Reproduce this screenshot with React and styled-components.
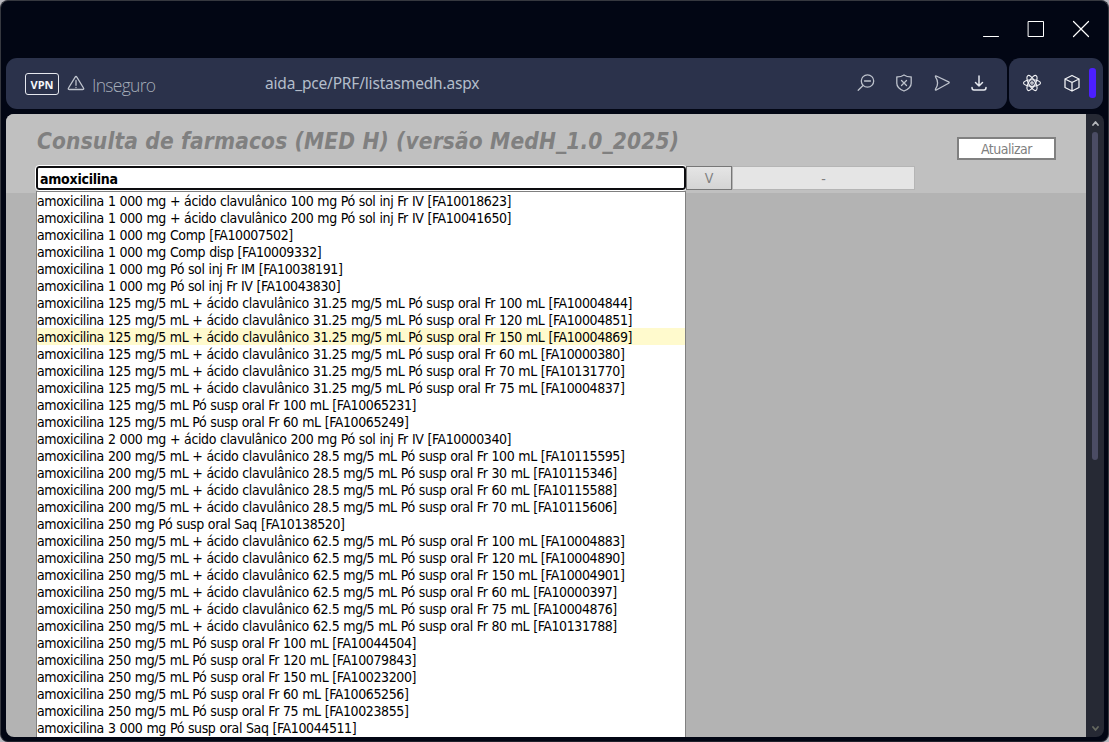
import React from 'react';
import styled, { createGlobalStyle } from 'styled-components';

const Global = createGlobalStyle`
  * { box-sizing: border-box; }
  html, body { margin: 0; padding: 0; background: #b9b8bf; }
  body { width: 1109px; height: 742px; overflow: hidden; }
`;

const Window = styled.div`
  width: 1109px;
  height: 742px;
  display: flex;
  flex-direction: column;
  background: #020614;
  border: 1px solid #36383f;
  border-bottom-color: #20232d;
  border-radius: 8px;
  overflow: hidden;
`;

const TitleBar = styled.header`
  height: 57px;
  flex: none;
  display: flex;
  justify-content: flex-end;
  gap: 21px;
  padding: 16px 15px 0 0;
`;

const Toolbar = styled.nav`
  height: 51px;
  flex: none;
  display: flex;
  gap: 2px;
  padding: 0 5px;
`;

const Group = styled.div`
  height: 51px;
  width: ${(p) => p.$width}px;
  display: flex;
  align-items: center;
  background: #2b324b;
  border-radius: 11px;
  padding-left: ${(p) => p.$inset}px;
`;

const Vpn = styled.span`
  width: 34px;
  height: 22px;
  border: 1px solid #e6e8ee;
  border-radius: 3px;
  color: #f5f6fa;
  font: 700 11px/21px 'Open Sans', sans-serif;
  text-align: center;
  margin-right: 8px;
`;

const Security = styled.span`
  width: 173px;
  margin-left: 7px;
  padding-top: 3px;
  color: #a5adb9;
  font: 300 17.5px/24px 'Open Sans', sans-serif;
  letter-spacing: -0.7px;
`;

const Address = styled.span`
  width: 591px;
  padding-bottom: 1px;
  color: #b3bdca;
  font: 400 15.5px/24px 'Noto Sans', sans-serif;
  letter-spacing: -0.18px;
`;

const Actions = styled.div`
  display: flex;
  gap: 18px;
  padding-bottom: 1px;
`;

const Extensions = styled.div`
  display: flex;
  align-items: center;
  gap: 20px;
  padding-bottom: 1px;
`;

const Accent = styled.i`
  width: 7px;
  height: 30px;
  margin: -1px 0 0 7px;
  border-radius: 3px;
  background: #4c1fff;
`;

const Viewport = styled.div`
  display: flex;
  width: 1098px;
  height: 623px;
  margin: 5px 0 0 5px;
  border-radius: 8px;
  overflow: hidden;
`;

const Page = styled.main`
  width: 1080px;
  height: 623px;
  background: #b3b3b3;
  overflow: hidden;
`;

const Header = styled.section`
  height: 79px;
  display: flex;
  justify-content: space-between;
  padding: 0 30px;
  background: #c0c0c0;
`;

const Search = styled.div`
  display: flex;
  flex-direction: column;
`;

const Heading = styled.h1`
  height: 52px;
  margin: 0;
  padding-left: 1px;
  color: #808080;
  font: italic 700 22.5px/55px 'DejaVu Sans Condensed', 'DejaVu Sans', sans-serif;
  letter-spacing: 0.15px;
  white-space: nowrap;
`;

const Controls = styled.div`
  display: flex;
  height: 24px;
`;

const Query = styled.input`
  width: 650px;
  height: 24px;
  padding: 1px 2px 0;
  border: 2px solid #0d0d10;
  border-radius: 3px;
  outline: 1px solid #fff;
  color: #000;
  background: #fff;
  font: 700 14px/20px 'DejaVu Sans Condensed', 'DejaVu Sans', sans-serif;
  letter-spacing: -0.25px;
  caret-color: transparent;
`;

const Toggle = styled.button`
  width: 46px;
  height: 24px;
  padding: 1px 0 0;
  border: 1px solid #777;
  background: linear-gradient(#e5e5e5, #d4d4d4);
  color: #808080;
  font: 14px/21px 'DejaVu Sans Condensed', sans-serif;
`;

const Result = styled.div`
  width: 183px;
  height: 24px;
  border: 1px solid #b5b5b5;
  background: #e5e5e5;
  color: #808080;
  text-align: center;
  font: 14px/24px 'DejaVu Sans Condensed', sans-serif;
`;

const Refresh = styled.button`
  width: 99px;
  height: 23px;
  margin-top: 23px;
  padding: 1px 0 0;
  border: 2px solid #808080;
  background: #fff;
  color: #808080;
  font: 14px/18px 'DejaVu Sans Condensed', sans-serif;
  letter-spacing: -0.5px;
`;

const Options = styled.ul`
  width: 650px;
  height: 546px;
  margin: -2px 0 0 30px;
  padding: 0;
  position: relative;
  list-style: none;
  border: solid #808080;
  border-width: 1px 1px 0;
  background: #fff;
`;

const Option = styled.li`
  height: 17px;
  background: ${(p) => (p.$active ? '#fffacd' : '#fff')};
  color: #000;
  font: 14px/18px 'DejaVu Sans Condensed', sans-serif;
  letter-spacing: -0.4px;
  word-spacing: 0.42px;
  white-space: nowrap;
`;

const Scrollbar = styled.aside`
  width: 18px;
  height: 623px;
  display: flex;
  flex-direction: column;
  align-items: center;
  padding: 6px 0 5px;
  background: #262934;
`;

const Thumb = styled.div`
  width: 6px;
  height: 328px;
  margin: 5px 0 auto;
  border-radius: 3px;
  background: #4b4c64;
`;

const Drawing = styled.svg`
  display: block;
  flex: none;
  fill: none;
  stroke: ${(p) => p.$color || '#bdc2cc'};
  stroke-width: ${(p) => p.$line || 1.3};
  stroke-linecap: round;
  stroke-linejoin: round;
`;

const Icon = ({ size = 20, color, line, children }) => (
  <Drawing width={size} height={size} viewBox={`0 0 ${size} ${size}`} $color={color} $line={line}>
    {children}
  </Drawing>
);

const clav = 'ácido clavulânico';
const rows = [
  `1 000 mg + ${clav} 100 mg Pó sol inj Fr IV [FA10018623]`,
  `1 000 mg + ${clav} 200 mg Pó sol inj Fr IV [FA10041650]`,
  '1 000 mg Comp [FA10007502]',
  '1 000 mg Comp disp [FA10009332]',
  '1 000 mg Pó sol inj Fr IM [FA10038191]',
  '1 000 mg Pó sol inj Fr IV [FA10043830]',
  `125 mg/5 mL + ${clav} 31.25 mg/5 mL Pó susp oral Fr 100 mL [FA10004844]`,
  `125 mg/5 mL + ${clav} 31.25 mg/5 mL Pó susp oral Fr 120 mL [FA10004851]`,
  `125 mg/5 mL + ${clav} 31.25 mg/5 mL Pó susp oral Fr 150 mL [FA10004869]`,
  `125 mg/5 mL + ${clav} 31.25 mg/5 mL Pó susp oral Fr 60 mL [FA10000380]`,
  `125 mg/5 mL + ${clav} 31.25 mg/5 mL Pó susp oral Fr 70 mL [FA10131770]`,
  `125 mg/5 mL + ${clav} 31.25 mg/5 mL Pó susp oral Fr 75 mL [FA10004837]`,
  '125 mg/5 mL Pó susp oral Fr 100 mL [FA10065231]',
  '125 mg/5 mL Pó susp oral Fr 60 mL [FA10065249]',
  `2 000 mg + ${clav} 200 mg Pó sol inj Fr IV [FA10000340]`,
  `200 mg/5 mL + ${clav} 28.5 mg/5 mL Pó susp oral Fr 100 mL [FA10115595]`,
  `200 mg/5 mL + ${clav} 28.5 mg/5 mL Pó susp oral Fr 30 mL [FA10115346]`,
  `200 mg/5 mL + ${clav} 28.5 mg/5 mL Pó susp oral Fr 60 mL [FA10115588]`,
  `200 mg/5 mL + ${clav} 28.5 mg/5 mL Pó susp oral Fr 70 mL [FA10115606]`,
  '250 mg Pó susp oral Saq [FA10138520]',
  `250 mg/5 mL + ${clav} 62.5 mg/5 mL Pó susp oral Fr 100 mL [FA10004883]`,
  `250 mg/5 mL + ${clav} 62.5 mg/5 mL Pó susp oral Fr 120 mL [FA10004890]`,
  `250 mg/5 mL + ${clav} 62.5 mg/5 mL Pó susp oral Fr 150 mL [FA10004901]`,
  `250 mg/5 mL + ${clav} 62.5 mg/5 mL Pó susp oral Fr 60 mL [FA10000397]`,
  `250 mg/5 mL + ${clav} 62.5 mg/5 mL Pó susp oral Fr 75 mL [FA10004876]`,
  `250 mg/5 mL + ${clav} 62.5 mg/5 mL Pó susp oral Fr 80 mL [FA10131788]`,
  '250 mg/5 mL Pó susp oral Fr 100 mL [FA10044504]',
  '250 mg/5 mL Pó susp oral Fr 120 mL [FA10079843]',
  '250 mg/5 mL Pó susp oral Fr 150 mL [FA10023200]',
  '250 mg/5 mL Pó susp oral Fr 60 mL [FA10065256]',
  '250 mg/5 mL Pó susp oral Fr 75 mL [FA10023855]',
  '3 000 mg Pó susp oral Saq [FA10044511]',
];

export default function App() {
  return (
    <>
      <Global />
      <Window>
        <TitleBar>
          <Icon size={24} color="#fff" line={1}><path d="M4.5 19.5h15" /></Icon>
          <Icon size={24} color="#fff" line={1}><path d="M4.5 4.5h15v15h-15z" /></Icon>
          <Icon size={24} color="#fff" line={1.2}><path d="M4.5 4.5l15 15M19.5 4.5l-15 15" /></Icon>
        </TitleBar>
        <Toolbar>
          <Group $width={1001} $inset={19}>
            <Vpn>VPN</Vpn>
            <Icon size={18}>
              <path d="M8 2.3 1.5 13q-.8 1.500 1 1.500h13q1.800 0 1-1.500L10 2.300q-1-1.600-2 0ZM9 5.500v4.800M9 12.300v.3" />
            </Icon>
            <Security>Inseguro</Security>
            <Address>aida_pce/PRF/listasmedh.aspx</Address>
            <Actions>
              <Icon>
                <circle cx="11.500" cy="8" r="6.200" /><path d="M8.500 8h6M7 12.500l-4.800 4.800" />
              </Icon>
              <Icon>
                <path d="M10 2q3.500 2.200 7.200 1.900v6.300q0 5-7.200 7.800-7.200-2.800-7.200-7.800V3.900Q6.500 4.200 10 2ZM7.500 7.500l5 5M12.500 7.500l-5 5" />
              </Icon>
              <Icon>
                <path d="M3.500 3.800q-.4-1.200.8-.8l12.300 5.900q1.200.7 0 1.400L4.300 17q-1.200.5-.8-.8Q7.700 10 3.500 3.800Z" />
              </Icon>
              <Icon size={18} color="#e6e9ef" line={1.5}>
                <path d="M9 3v10M5.500 9.500 9 13l3.500-3.500M2 14.500q0 2.500 2 2.500h10q2 0 2-2.500" />
              </Icon>
            </Actions>
          </Group>
          <Group $width={94} $inset={13}>
            <Extensions>
              <Icon color="#f0f1f4" line={1.15}>
                <ellipse cx="10" cy="10" rx="8.500" ry="3.300" />
                <ellipse cx="10" cy="10" rx="8.500" ry="3.300" transform="rotate(60 10 10)" />
                <ellipse cx="10" cy="10" rx="8.500" ry="3.300" transform="rotate(120 10 10)" />
                <circle cx="10" cy="10" r="1.200" />
              </Icon>
              <Icon color="#f0f1f4" line={1.3}>
                <path d="M10 2.500 17 6v8.500L10 18l-7-3.500V6ZM3 6l7 3.500L17 6M10 9.500V18" />
              </Icon>
            </Extensions>
            <Accent />
          </Group>
        </Toolbar>
        <Viewport>
          <Page>
            <Header>
              <Search>
                <Heading>Consulta de farmacos (MED H) (versão MedH_1.0_2025)</Heading>
                <Controls>
                  <Query defaultValue="amoxicilina" />
                  <Toggle>V</Toggle>
                  <Result>-</Result>
                </Controls>
              </Search>
              <Refresh>Atualizar</Refresh>
            </Header>
            <Options>
              {rows.map((text, i) => (
                <Option key={text} $active={i === 8}>amoxicilina {text}</Option>
              ))}
            </Options>
          </Page>
          <Scrollbar>
            <Icon size={7} color="#b6b8bc" line={1.8}><path d="M1 5l2.500-3L6 5" /></Icon>
            <Thumb />
            <Icon size={7} color="#666960" line={1.8}><path d="M1 2l2.500 3L6 2" /></Icon>
          </Scrollbar>
        </Viewport>
      </Window>
    </>
  );
}
